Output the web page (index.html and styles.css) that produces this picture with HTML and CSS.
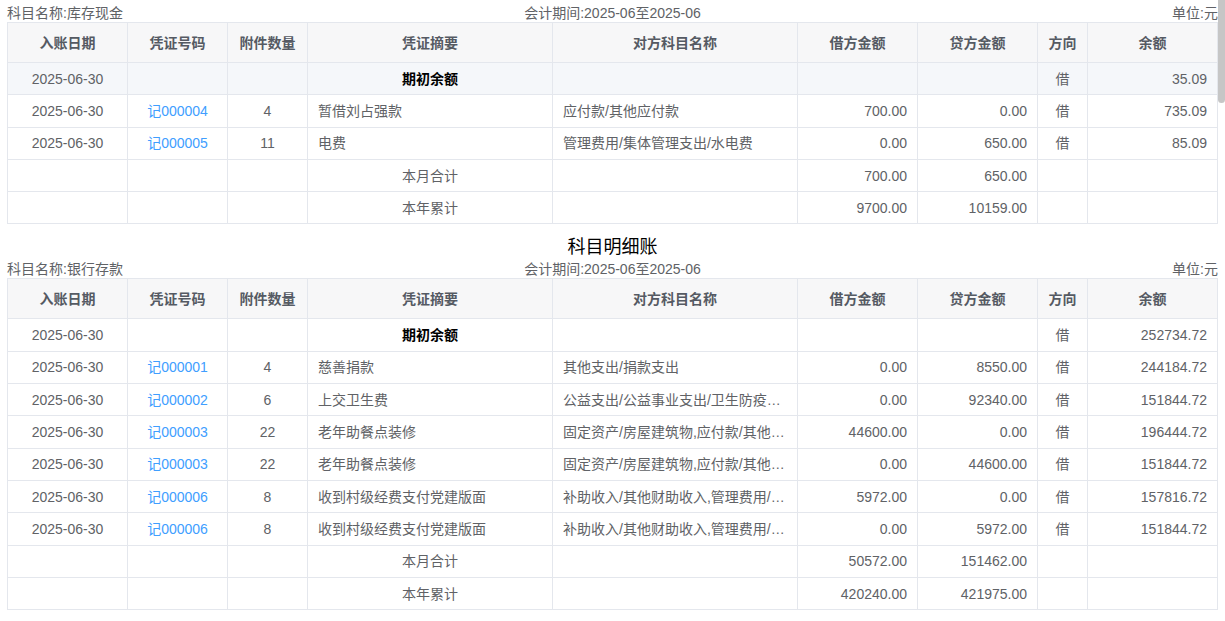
FILE: index.html
```html
<!DOCTYPE html>
<html lang="zh-CN">
<head>
<meta charset="utf-8">
<title>科目明细账</title>
<link rel="stylesheet" href="styles.css">
</head>
<body>
<div class="page">
  <section class="ledger">
    <div class="info">
      <span class="info-left">科目名称:库存现金</span>
      <span class="info-center">会计期间:2025-06至2025-06</span>
      <span class="info-right">单位:元</span>
    </div>
    <table class="grid">
      <colgroup>
        <col class="c1"><col class="c2"><col class="c3"><col class="c4"><col class="c5"><col class="c6"><col class="c7"><col class="c8"><col class="c9">
      </colgroup>
      <thead>
        <tr><th>入账日期</th><th>凭证号码</th><th>附件数量</th><th>凭证摘要</th><th>对方科目名称</th><th>借方金额</th><th>贷方金额</th><th>方向</th><th>余额</th></tr>
      </thead>
      <tbody>
        <tr class="hover"><td class="ctr">2025-06-30</td><td></td><td></td><td class="ctr strong">期初余额</td><td></td><td></td><td></td><td class="ctr">借</td><td class="num">35.09</td></tr>
        <tr><td class="ctr">2025-06-30</td><td class="ctr"><a class="link">记000004</a></td><td class="ctr">4</td><td><div class="ell">暂借刘占强款</div></td><td><div class="ell">应付款/其他应付款</div></td><td class="num">700.00</td><td class="num">0.00</td><td class="ctr">借</td><td class="num">735.09</td></tr>
        <tr><td class="ctr">2025-06-30</td><td class="ctr"><a class="link">记000005</a></td><td class="ctr">11</td><td><div class="ell">电费</div></td><td><div class="ell">管理费用/集体管理支出/水电费</div></td><td class="num">0.00</td><td class="num">650.00</td><td class="ctr">借</td><td class="num">85.09</td></tr>
        <tr><td></td><td></td><td></td><td class="ctr">本月合计</td><td></td><td class="num">700.00</td><td class="num">650.00</td><td></td><td></td></tr>
        <tr><td></td><td></td><td></td><td class="ctr">本年累计</td><td></td><td class="num">9700.00</td><td class="num">10159.00</td><td></td><td></td></tr>
      </tbody>
    </table>
  </section>

  <section class="ledger">
    <h2 class="title">科目明细账</h2>
    <div class="info">
      <span class="info-left">科目名称:银行存款</span>
      <span class="info-center">会计期间:2025-06至2025-06</span>
      <span class="info-right">单位:元</span>
    </div>
    <table class="grid">
      <colgroup>
        <col class="c1"><col class="c2"><col class="c3"><col class="c4"><col class="c5"><col class="c6"><col class="c7"><col class="c8"><col class="c9">
      </colgroup>
      <thead>
        <tr><th>入账日期</th><th>凭证号码</th><th>附件数量</th><th>凭证摘要</th><th>对方科目名称</th><th>借方金额</th><th>贷方金额</th><th>方向</th><th>余额</th></tr>
      </thead>
      <tbody>
        <tr><td class="ctr">2025-06-30</td><td></td><td></td><td class="ctr strong">期初余额</td><td></td><td></td><td></td><td class="ctr">借</td><td class="num">252734.72</td></tr>
        <tr><td class="ctr">2025-06-30</td><td class="ctr"><a class="link">记000001</a></td><td class="ctr">4</td><td><div class="ell">慈善捐款</div></td><td><div class="ell">其他支出/捐款支出</div></td><td class="num">0.00</td><td class="num">8550.00</td><td class="ctr">借</td><td class="num">244184.72</td></tr>
        <tr><td class="ctr">2025-06-30</td><td class="ctr"><a class="link">记000002</a></td><td class="ctr">6</td><td><div class="ell">上交卫生费</div></td><td><div class="ell">公益支出/公益事业支出/卫生防疫费用</div></td><td class="num">0.00</td><td class="num">92340.00</td><td class="ctr">借</td><td class="num">151844.72</td></tr>
        <tr><td class="ctr">2025-06-30</td><td class="ctr"><a class="link">记000003</a></td><td class="ctr">22</td><td><div class="ell">老年助餐点装修</div></td><td><div class="ell">固定资产/房屋建筑物,应付款/其他应付款</div></td><td class="num">44600.00</td><td class="num">0.00</td><td class="ctr">借</td><td class="num">196444.72</td></tr>
        <tr><td class="ctr">2025-06-30</td><td class="ctr"><a class="link">记000003</a></td><td class="ctr">22</td><td><div class="ell">老年助餐点装修</div></td><td><div class="ell">固定资产/房屋建筑物,应付款/其他应付款</div></td><td class="num">0.00</td><td class="num">44600.00</td><td class="ctr">借</td><td class="num">151844.72</td></tr>
        <tr><td class="ctr">2025-06-30</td><td class="ctr"><a class="link">记000006</a></td><td class="ctr">8</td><td><div class="ell">收到村级经费支付党建版面</div></td><td><div class="ell">补助收入/其他财助收入,管理费用/集体管理支出</div></td><td class="num">5972.00</td><td class="num">0.00</td><td class="ctr">借</td><td class="num">157816.72</td></tr>
        <tr><td class="ctr">2025-06-30</td><td class="ctr"><a class="link">记000006</a></td><td class="ctr">8</td><td><div class="ell">收到村级经费支付党建版面</div></td><td><div class="ell">补助收入/其他财助收入,管理费用/集体管理支出</div></td><td class="num">0.00</td><td class="num">5972.00</td><td class="ctr">借</td><td class="num">151844.72</td></tr>
        <tr><td></td><td></td><td></td><td class="ctr">本月合计</td><td></td><td class="num">50572.00</td><td class="num">151462.00</td><td></td><td></td></tr>
        <tr><td></td><td></td><td></td><td class="ctr">本年累计</td><td></td><td class="num">420240.00</td><td class="num">421975.00</td><td></td><td></td></tr>
      </tbody>
    </table>
  </section>
</div>
<div class="scroll-thumb"></div>
</body>
</html>
```

FILE: styles.css
```css
html, body {
  margin: 0;
  padding: 0;
  background: #ffffff;
  overflow: hidden;
}

body {
  font-family: "Liberation Sans", "Noto Sans CJK SC", sans-serif;
  font-size: 14px;
  color: #606266;
}

.page {
  width: 1211px;
  margin-left: 7px;
  padding-top: 4px;
}

.info {
  display: grid;
  grid-template-columns: 1fr auto 1fr;
  height: 18px;
  line-height: 18px;
  font-size: 14px;
  color: #606266;
}

.info-center { text-align: center; }
.info-right { text-align: right; }

.title {
  margin: 10px 0 0;
  height: 26px;
  line-height: 26px;
  font-size: 18px;
  font-weight: normal;
  text-align: center;
  color: #000000;
}

.grid {
  width: 1211px;
  table-layout: fixed;
  border-collapse: separate;
  border-spacing: 0;
  border-top: 1px solid #e4e7ed;
  border-left: 1px solid #e4e7ed;
}

.c1 { width: 120px; }
.c2 { width: 100px; }
.c3 { width: 80px; }
.c4 { width: 245px; }
.c5 { width: 245px; }
.c6 { width: 120px; }
.c7 { width: 120px; }
.c8 { width: 50px; }
.c9 { width: 130px; }

.grid th,
.grid td {
  box-sizing: border-box;
  border-right: 1px solid #e4e7ed;
  border-bottom: 1px solid #e4e7ed;
  padding: 0 10px;
  line-height: 20px;
  vertical-align: middle;
  white-space: nowrap;
  overflow: hidden;
}

.grid th {
  height: 40px;
  background: #f7f7f8;
  color: #555a63;
  font-weight: bold;
  text-align: center;
}

.grid td {
  height: 32.3px;
  text-align: left;
}

.grid tr.hover td {
  background: #f5f7fa;
}

.grid td.ctr { text-align: center; }
.grid td.num { text-align: right; }

.grid td.strong {
  font-weight: bold;
  color: #000000;
}

.ell {
  overflow: hidden;
  white-space: nowrap;
  text-overflow: ellipsis;
}

.link {
  color: #409eff;
  text-decoration: none;
  cursor: pointer;
}

.scroll-thumb {
  position: fixed;
  top: 0;
  right: 0;
  width: 7px;
  height: 103px;
  background: #c6c6c6;
  border-radius: 0 0 4px 4px;
}
```
